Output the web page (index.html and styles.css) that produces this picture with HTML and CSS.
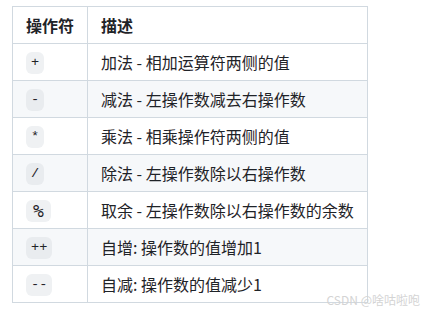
FILE: index.html
```html
<!DOCTYPE html>
<html>
<head>
<meta charset="utf-8">
<link rel="stylesheet" href="styles.css">
</head>
<body>
<table class="ops">
  <thead>
    <tr><th>操作符</th><th>描述</th></tr>
  </thead>
  <tbody>
    <tr><td><code>+</code></td><td>加法 - 相加运算符两侧的值</td></tr>
    <tr><td><code>-</code></td><td>减法 - 左操作数减去右操作数</td></tr>
    <tr><td><code>*</code></td><td>乘法 - 相乘操作符两侧的值</td></tr>
    <tr><td><code>/</code></td><td>除法 - 左操作数除以右操作数</td></tr>
    <tr><td><code><span class="pct">%</span></code></td><td>取余 - 左操作数除以右操作数的余数</td></tr>
    <tr><td><code>++</code></td><td>自增: 操作数的值增加1</td></tr>
    <tr><td><code>--</code></td><td>自减: 操作数的值减少1</td></tr>
  </tbody>
</table>
<div class="watermark">CSDN @啥咕啦咆</div>
</body>
</html>
```
FILE: styles.css
```css
html, body {
  margin: 0;
  padding: 0;
  background: #ffffff;
}
body {
  padding: 6px 12px;
  font-family: "Noto Sans CJK SC", "Noto Sans", sans-serif;
  font-size: 16px;
  color: #1f2328;
  position: relative;
  height: 299px;
}
.ops {
  border-collapse: collapse;
  border-spacing: 0;
}
.ops th, .ops td {
  border: 1px solid #d1d9e0;
  padding: 6px 13px;
  line-height: 24px;
  height: 24px;
  text-align: left;
  white-space: nowrap;
}
.ops th {
  font-weight: 700;
}
.ops tbody tr:nth-child(even) {
  background: #f6f8fa;
}
.ops code {
  display: inline-block;
  vertical-align: top;
  margin-top: 2px;
  height: 22px;
  line-height: 22px;
  padding: 0 5px;
  border-radius: 6px;
  background: #eff1f3;
  font-family: "Liberation Mono", monospace;
  font-size: 13.6px;
  color: #1f2328;
}
.ops tbody tr:nth-child(even) code {
  background: #e9ecef;
}
.pct {
  display: inline-block;
  width: 15px;
  text-align: center;
  font-family: "DejaVu Sans Mono", monospace;
  font-size: 18px;
  font-weight: 300;
}
.watermark {
  position: absolute;
  right: 1px;
  bottom: 4px;
  font-size: 12px;
  color: #d4d4d4;
  font-family: "Noto Sans CJK SC", sans-serif;
  line-height: 14px;
  white-space: nowrap;
}
```
